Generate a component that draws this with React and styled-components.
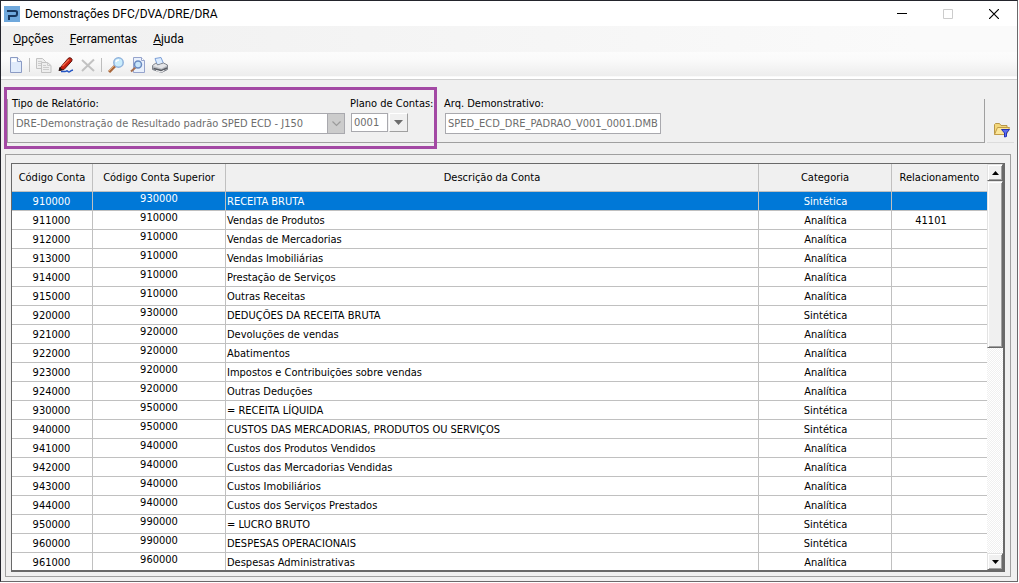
import React from "react";
import styled, { createGlobalStyle, css } from "styled-components";

const ui = '"DejaVu Sans Condensed", "Noto Sans", sans-serif';
const chrome = 'Roboto, "Open Sans", sans-serif';

const GlobalStyle = createGlobalStyle`
  *, *::before, *::after { box-sizing: border-box; }
  body { margin: 0; background: #fff; color: #000; font: 11px/14px "Noto Sans", "Open Sans", sans-serif; }
  button, input, select { font: inherit; margin: 0; border-radius: 0; }
  #root { display: flow-root; }
`;

const Window = styled.main`
  display: flex;
  flex-direction: column;
  min-height: calc(100vh - 1px);
  margin: 0 1px 1px 0;
  border: 1px solid #23242c;
  border-right-color: #6b696b;
  border-bottom-color: #6b696b;
  background: #f0f0f0;
`;

const TitleBar = styled.header`
  display: flex;
  align-items: center;
  height: 25px;
  padding-left: 3px;
  background: #fff;
  font-family: ${chrome};
`;

const Title = styled.h1`
  flex: 1;
  margin: 0 0 0 5px;
  font-size: 12px;
  font-weight: 400;
  line-height: 16px;
`;

const CaptionButton = styled.button`
  display: flex;
  align-items: center;
  justify-content: center;
  width: 46px;
  height: 25px;
  padding: 0;
  border: 0;
  background: none;
  color: ${(p) => (p.disabled ? "#ccc" : "#000")};
`;

const MenuBar = styled.nav`
  display: flex;
  height: 26px;
  padding-left: 4px;
  background: linear-gradient(90deg, #f0f0f0, #fafafa 90%);
  font-family: ${chrome};
`;

const MenuItem = styled.button`
  padding: 0 8px;
  border: 0;
  background: none;
  color: #000;
  font-size: 12px;
  line-height: 26px;

  &::first-letter { text-decoration: underline; }
`;

const ToolBar = styled.div`
  display: flex;
  align-items: center;
  height: 28px;
  padding: 0 4px 2px;
  background: linear-gradient(#fcfcfc, #fafafa 30%, #ededed 88%, #fff 92%);
  border-bottom: 1px solid #d0d0d0;
`;

const ToolButton = styled.button`
  display: flex;
  align-items: center;
  justify-content: center;
  width: 22px;
  height: 22px;
  padding: 0;
  border: 0;
  background: none;
`;

const ToolSeparator = styled.span`
  width: 1px;
  height: 14px;
  margin: 0 3px 0 2px;
  background: #bdbdbd;
`;

const Filters = styled.section`
  display: flex;
  position: relative;
  padding: 19px 3px 0 6px;
`;

const FilterGroup = styled.div`
  display: flex;
  flex: 1;
  gap: 6px;
  height: 44px;
  padding-left: 5px;
  border: solid #a0a0a0;
  border-width: 0 1px 1px;
`;

const Highlight = styled.div`
  position: absolute;
  top: 7px;
  left: 3px;
  width: 433px;
  height: 62px;
  border: 3px solid #a349a4;
  pointer-events: none;
`;

const Field = styled.div`
  flex: none;
  width: ${(p) => p.$width}px;
`;

const FieldLabel = styled.label`
  display: block;
  height: 14px;
  margin: -2px 0 2px -1px;
  font-family: ${ui};
  white-space: nowrap;
`;

const box = css`
  display: block;
  padding: 0 2px;
  border: 1px solid #a9a9ae;
  background: #fff;
  color: #6d6d6d;
  font-family: ${ui};
  opacity: 1;
`;

const Combo = styled.div`
  display: grid;
  grid-template-columns: 1fr 18px;
`;

const ReportSelect = styled.select`
  ${box}
  grid-area: 1 / 1 / 2 / 3;
  appearance: none;
  width: 100%;
  height: 21px;
`;

const ComboArrow = styled.span`
  grid-area: 1 / 2;
  display: flex;
  align-items: center;
  justify-content: center;
  border: 1px solid #a9a9ae;
  background: #ccc;
  z-index: 1;
  pointer-events: none;
`;

const TextBox = styled.input`
  ${box}
  width: ${(p) => p.$width};
  height: ${(p) => p.$height}px;
`;

const PlanPicker = styled.div`
  display: flex;
  gap: 1px;
`;

const PlanButton = styled.button`
  display: flex;
  align-items: center;
  justify-content: center;
  width: 19px;
  height: 19px;
  padding: 0;
  border: 1px solid;
  border-color: #fff #a0a0a0 #a0a0a0 #fff;
  background: #f0f0f0;
`;

const FolderSlot = styled.div`
  display: flex;
  align-items: flex-end;
  justify-content: center;
  width: 27px;
  margin-left: 2px;
  padding: 0 0 4px 2px;
  border-bottom: 1px solid #dcdcdc;
`;

const PlainButton = styled.button`
  display: flex;
  padding: 0;
  border: 0;
  background: none;
`;

const GridPanel = styled.section`
  flex: 1;
  margin: 11px 6px 4px 4px;
  padding: 8px 5px 4px;
  border: 1px solid #a0a0a0;
`;

const GridFrame = styled.div`
  display: flex;
  height: 409px;
  overflow: hidden;
  border: solid #696969;
  border-width: 1px 2px 2px 1px;
  background: #fff;
`;

const Grid = styled.table`
  flex: 1;
  width: 0;
  table-layout: fixed;
  border-collapse: separate;
  border-spacing: 0;
  font-family: ${ui};
`;

const Col = styled.col`
  width: ${(p) => p.$width};
`;

const Head = styled.th`
  height: 28px;
  padding: 0;
  border: solid silver;
  border-width: 0 ${(p) => (p.$last ? 0 : 1)}px 1px 0;
  background: #f0f0f0;
  font-weight: 400;
`;

const Row = styled.tr`
  background: ${(p) => (p.$selected ? "#0078d7" : "#fff")};
  color: ${(p) => (p.$selected ? "#fff" : "#000")};
`;

const Cell = styled.td`
  height: 19px;
  padding: ${(p) => (p.$raised ? "0 0 4px" : "3px 0 1px 1px")};
  border: solid silver;
  border-width: 0 ${(p) => (p.$last ? 0 : 1)}px 1px 0;
  text-align: ${(p) => (p.$left ? "left" : "center")};
  white-space: nowrap;
  ${(p) => p.$code && "padding-right: 2px;"}
  ${(p) => p.$last && "padding-right: 18px;"}
`;

const ScrollBar = styled.div`
  display: flex;
  flex-direction: column;
  width: 16px;
  background: repeating-conic-gradient(#fff 0 25%, #f0f0f0 0 50%) 0 0 / 2px 2px;
`;

const raised = css`
  border: 1px solid;
  border-color: #e3e3e3 #696969 #696969 #e3e3e3;
  background: #f0f0f0;
  box-shadow: inset 1px 1px #fff, inset -1px -1px #a0a0a0;
`;

const ScrollButton = styled.button`
  ${raised}
  display: flex;
  flex: none;
  align-items: center;
  justify-content: center;
  height: 17px;
  padding: 0;
`;

const ScrollTrack = styled.div`
  flex: 1;
`;

const ScrollThumb = styled.div`
  ${raised}
  height: 45%;
`;

const Icon = ({ size = 16, children }) => (
  <svg width={size} height={size} viewBox={`0 0 ${size} ${size}`} fill="none" aria-hidden="true">
    {children}
  </svg>
);

const LogoIcon = () => (
  <Icon>
    <path fill="#6fa8dc" d="M0 0h16v16H0z" />
    <path stroke="#17365d" strokeWidth="2" d="M3 5h8q2 0 2 1v2q0 2-2 2H5v4" />
  </Icon>
);

const NewIcon = () => (
  <Icon>
    <path d="M2.500.5h7l4 4v11h-11z" fill="#e0ebfb" stroke="#8b9bc4" />
    <path d="M9.500.5v4h4" fill="#fff" stroke="#8b9bc4" />
    <path d="M3.500 1.500h5v3.500h-5z" fill="#fff" />
  </Icon>
);

const CopyIcon = () => (
  <Icon>
    <path d="M.5 1.500h6l3 3v7h-9z" fill="#eee" stroke="#c2c2c2" />
    <path d="M2 4.500h4M2 6.500h4M2 8.500h4" stroke="#ccc" />
    <path d="M5.500 5.500h6l3.500 3v7H5.500z" fill="#eee" stroke="#c2c2c2" />
    <path d="M11.500 5.500v3H15M7 8.500h3M7 10.500h6M7 12.500h6" stroke="#ccc" />
  </Icon>
);

const PenIcon = () => (
  <Icon>
    <path d="M2 11 10 1.500q1.500-1.500 3.200-.3 1.600 1.300.5 3L6 12.500l-4.500 1z" fill="#c8200f" stroke="#5c120b" />
    <path d="M4.500 9 11 2.500" stroke="#f2694a" strokeWidth="1.500" />
    <path d="m.5 14 1-4 3.500 3z" fill="#211" />
    <path d="M3 14.500h4q1 0 1.500-.5t1.500.5 2 0 3-1.500" stroke="#2355c4" strokeWidth="1.500" />
  </Icon>
);

const DeleteIcon = () => (
  <Icon>
    <path d="m2 3 12 11M14 2.500 2 14" stroke="#c2c2c2" strokeWidth="2" />
  </Icon>
);

const SearchIcon = () => (
  <Icon>
    <path d="m1 15 6-6" stroke="#a8653a" strokeWidth="3" />
    <path d="m1 14 5-5" stroke="#e3aa74" />
    <circle cx="10.500" cy="5.500" r="4.700" fill="#c9ecfc" stroke="#8fb2dc" strokeWidth="1.500" />
    <path d="M8 5q.5-2 3-2" stroke="#fff" strokeWidth="1.500" />
  </Icon>
);

const PreviewIcon = () => (
  <Icon>
    <path d="M3.500.5h8l3 3v12h-11z" fill="#e9f0fc" stroke="#96a4cc" />
    <path d="M11.500.5v3h3" fill="#fff" stroke="#96a4cc" />
    <path d="m1 14.500 4.500-4" stroke="#a8704f" strokeWidth="2" />
    <circle cx="8" cy="7.500" r="3.500" fill="#c8e5fa" stroke="#6a8ac0" strokeWidth="1.500" />
  </Icon>
);

const PrinterIcon = () => (
  <Icon>
    <path d="m3 1.500 6-1 2.500 6-6 2z" fill="#dcecff" stroke="#7d9fd6" />
    <path d="M.5 8.500 4 6l1.500 2 6-2L15.500 8v4.500l-6 3-9-3z" fill="#b9bcc2" stroke="#80848c" />
    <path d="m1 9 8.500 2.500L15 8.500l-3.500-2-6 2L4 6.500z" fill="#e4e5e8" />
    <path d="m1.500 11.500 8 2 5.500-2.500" stroke="#5a5d64" strokeWidth="1.500" />
    <path d="m4 13.500 5 1.500 3-1.500" stroke="#f4f4f4" />
  </Icon>
);

const FolderFilterIcon = () => (
  <Icon>
    <path d="M.5 12.500v-10l1-1h4l1.500 2h6v2" fill="#f3d77a" stroke="#b8974a" />
    <path d="m.5 12.500 3-7h12l-3 7z" fill="#fbe69a" stroke="#c29d48" />
    <path d="M7.500 7.500h8l-3 3.500v3.500l-2 .5v-4z" fill="#5a6df0" stroke="#2431b5" />
  </Icon>
);

const Triangle = ({ up, wide, color = "#000" }) => (
  <svg width={wide ? 9 : 7} height={wide ? 5 : 4} viewBox="0 0 8 4" preserveAspectRatio="none" aria-hidden="true">
    <path d={up ? "M0 4h8L4 0z" : "M0 0h8L4 4z"} fill={color} />
  </svg>
);

const S = "Sintética";
const A = "Analítica";
const accounts = [
  ["910000", "930000", "RECEITA BRUTA", S],
  ["911000", "910000", "Vendas de Produtos", A, "41101"],
  ["912000", "910000", "Vendas de Mercadorias", A],
  ["913000", "910000", "Vendas Imobiliárias", A],
  ["914000", "910000", "Prestação de Serviços", A],
  ["915000", "910000", "Outras Receitas", A],
  ["920000", "930000", "DEDUÇÕES DA RECEITA BRUTA", S],
  ["921000", "920000", "Devoluções de vendas", A],
  ["922000", "920000", "Abatimentos", A],
  ["923000", "920000", "Impostos e Contribuições sobre vendas", A],
  ["924000", "920000", "Outras Deduções", A],
  ["930000", "950000", "= RECEITA LÍQUIDA", S],
  ["940000", "950000", "CUSTOS DAS MERCADORIAS, PRODUTOS OU SERVIÇOS", S],
  ["941000", "940000", "Custos dos Produtos Vendidos", A],
  ["942000", "940000", "Custos das Mercadorias Vendidas", A],
  ["943000", "940000", "Custos Imobiliários", A],
  ["944000", "940000", "Custos dos Serviços Prestados", A],
  ["950000", "990000", "= LUCRO BRUTO", S],
  ["960000", "990000", "DESPESAS OPERACIONAIS", S],
  ["961000", "960000", "Despesas Administrativas", A],
];

const tools = [
  ["Novo", NewIcon],
  null,
  ["Copiar", CopyIcon, true],
  ["Editar", PenIcon],
  ["Excluir", DeleteIcon, true],
  null,
  ["Localizar", SearchIcon],
  ["Visualizar", PreviewIcon],
  ["Imprimir", PrinterIcon],
];

export default function App() {
  return (
    <>
      <GlobalStyle />
      <Window>
        <TitleBar>
          <LogoIcon />
          <Title>Demonstrações DFC/DVA/DRE/DRA</Title>
          <CaptionButton aria-label="Minimizar">
            <Icon size={10}><path d="M0 4.500h10" stroke="currentColor" /></Icon>
          </CaptionButton>
          <CaptionButton aria-label="Maximizar" disabled>
            <Icon size={10}><path d="M.5.5h9v9h-9z" stroke="currentColor" /></Icon>
          </CaptionButton>
          <CaptionButton aria-label="Fechar">
            <Icon size={10}><path d="m0 0 10 10M10 0 0 10" stroke="currentColor" strokeWidth="1.200" /></Icon>
          </CaptionButton>
        </TitleBar>
        <MenuBar>
          <MenuItem>Opções</MenuItem>
          <MenuItem>Ferramentas</MenuItem>
          <MenuItem>Ajuda</MenuItem>
        </MenuBar>
        <ToolBar role="toolbar">
          {tools.map((tool, i) => {
            if (!tool) return <ToolSeparator key={i} />;
            const [name, Glyph, disabled] = tool;
            return (
              <ToolButton key={name} aria-label={name} disabled={disabled}>
                <Glyph />
              </ToolButton>
            );
          })}
        </ToolBar>

        <Filters>
          <FilterGroup>
            <Field $width={332}>
              <FieldLabel htmlFor="tipo">Tipo de Relatório:</FieldLabel>
              <Combo>
                <ReportSelect id="tipo" disabled>
                  <option>DRE-Demonstração de Resultado padrão SPED ECD - J150</option>
                </ReportSelect>
                <ComboArrow>
                  <svg width="9" height="6" viewBox="0 0 9 6" fill="none" aria-hidden="true">
                    <path d="m.5.5 4 4 4-4" stroke="#9b9b9b" strokeWidth="1.200" />
                  </svg>
                </ComboArrow>
              </Combo>
            </Field>
            <Field $width={88}>
              <FieldLabel htmlFor="plano">Plano de Contas:</FieldLabel>
              <PlanPicker>
                <TextBox id="plano" $width="37px" $height={19} defaultValue="0001" readOnly />
                <PlanButton aria-label="Selecionar plano">
                  <Triangle wide color="#6d6d6d" />
                </PlanButton>
              </PlanPicker>
            </Field>
            <Field $width={216}>
              <FieldLabel htmlFor="arquivo">Arq. Demonstrativo:</FieldLabel>
              <TextBox id="arquivo" $width="100%" $height={21} defaultValue="SPED_ECD_DRE_PADRAO_V001_0001.DMB" readOnly />
            </Field>
          </FilterGroup>
          <FolderSlot>
            <PlainButton aria-label="Filtrar"><FolderFilterIcon /></PlainButton>
          </FolderSlot>
          <Highlight />
        </Filters>

        <GridPanel>
          <GridFrame>
            <Grid>
              <colgroup>
                <Col $width="81px" />
                <Col $width="133px" />
                <Col $width="auto" />
                <Col $width="133px" />
                <Col $width="95px" />
              </colgroup>
              <thead>
                <tr>
                  <Head>Código Conta</Head>
                  <Head>Código Conta Superior</Head>
                  <Head>Descrição da Conta</Head>
                  <Head>Categoria</Head>
                  <Head $last>Relacionamento</Head>
                </tr>
              </thead>
              <tbody>
                {accounts.map(([code, parent, name, kind, link], i) => (
                  <Row key={code} $selected={i === 0}>
                    <Cell $code>{code}</Cell>
                    <Cell $raised>{parent}</Cell>
                    <Cell $left>{name}</Cell>
                    <Cell>{kind}</Cell>
                    <Cell $last>{link}</Cell>
                  </Row>
                ))}
              </tbody>
            </Grid>
            <ScrollBar>
              <ScrollButton aria-label="Rolar para cima"><Triangle up /></ScrollButton>
              <ScrollTrack><ScrollThumb /></ScrollTrack>
              <ScrollButton aria-label="Rolar para baixo"><Triangle /></ScrollButton>
            </ScrollBar>
          </GridFrame>
        </GridPanel>
      </Window>
    </>
  );
}
